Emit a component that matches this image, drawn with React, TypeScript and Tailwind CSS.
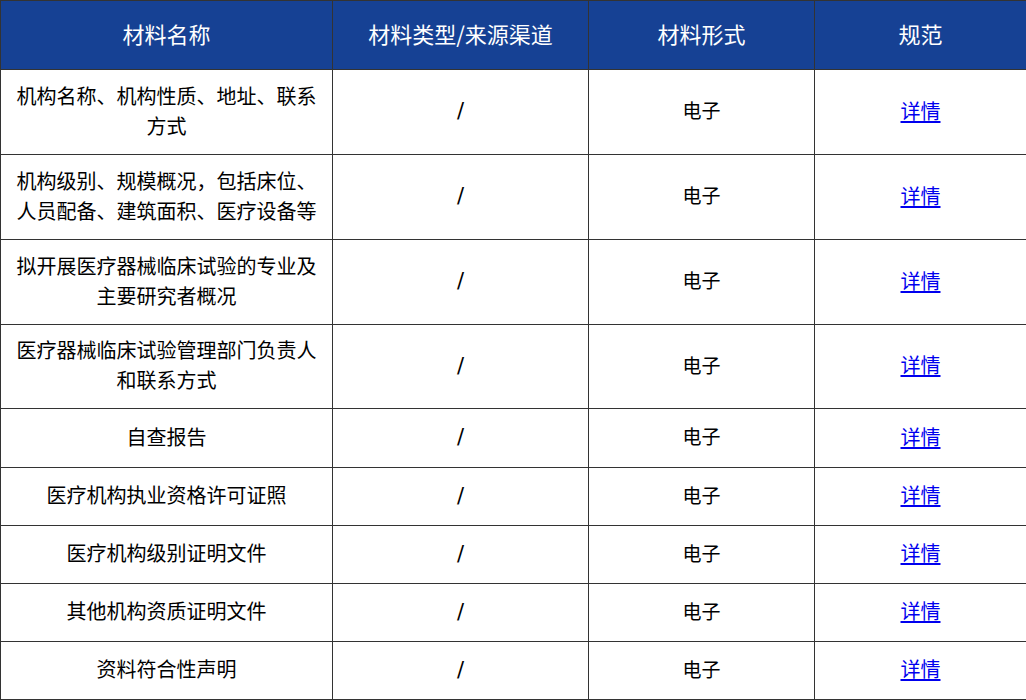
const rows = [
  { name: ['机构名称、机构性质、地址、联系', '方式'], h: 'h-[85px]' },
  { name: ['机构级别、规模概况，包括床位、', '人员配备、建筑面积、医疗设备等'], h: 'h-[85px]' },
  { name: ['拟开展医疗器械临床试验的专业及', '主要研究者概况'], h: 'h-[85px]' },
  { name: ['医疗器械临床试验管理部门负责人', '和联系方式'], h: 'h-[84px]' },
  { name: ['自查报告'], h: 'h-[59px]' },
  { name: ['医疗机构执业资格许可证照'], h: 'h-[58px]' },
  { name: ['医疗机构级别证明文件'], h: 'h-[58px]' },
  { name: ['其他机构资质证明文件'], h: 'h-[58px]' },
  { name: ['资料符合性声明'], h: 'h-[58px]' },
];

const headers = ['材料名称', '材料类型/来源渠道', '材料形式', '规范'];

export default function App() {
  return (
    <div className="w-[1026px] bg-white font-['Microsoft_YaHei','Noto_Sans_CJK_SC',sans-serif] text-black">
      <table className="w-[1026px] table-fixed border-collapse">
        <colgroup>
          <col className="w-[332px]" />
          <col className="w-[256px]" />
          <col className="w-[226px]" />
          <col className="w-[212px]" />
        </colgroup>
        <thead>
          <tr className="h-[69px] bg-[#164194] text-white">
            {headers.map((h) => (
              <th key={h} className="border border-[#333] px-2 pb-[3px] text-center text-[22px] font-normal">
                {h}
              </th>
            ))}
          </tr>
        </thead>
        <tbody>
          {rows.map((r, i) => (
            <tr key={i} className={r.h}>
              <td className="border border-[#333] px-1 pb-[3px] text-center text-[20px] leading-[30px]">
                {r.name.map((line, j) => (
                  <div key={j}>{line}</div>
                ))}
              </td>
              <td className="border border-[#333] text-center font-['DejaVu_Sans',sans-serif] text-[21px]">
                /
              </td>
              <td className="border border-[#333] pb-[3px] text-center text-[19px]">电子</td>
              <td className="border border-[#333] pb-[3px] text-center text-[20px]">
                <a href="#" className="text-[#0000ee] underline underline-offset-2">
                  详情
                </a>
              </td>
            </tr>
          ))}
        </tbody>
      </table>
    </div>
  );
}
